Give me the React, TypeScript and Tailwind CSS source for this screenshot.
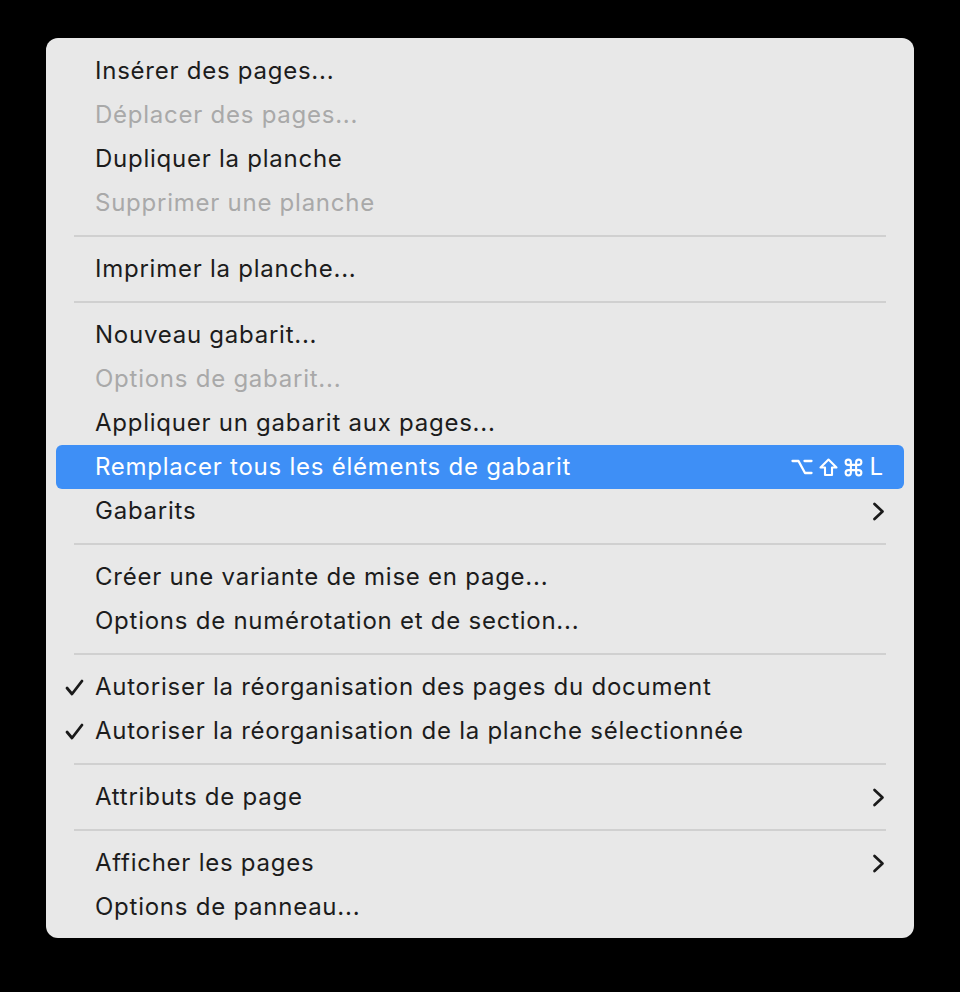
type Item =
  | { type: "sep" }
  | {
      type?: "item";
      label: string;
      disabled?: boolean;
      checked?: boolean;
      submenu?: boolean;
      active?: boolean;
      shortcut?: boolean;
    };

const items: Item[] = [
  { label: "Insérer des pages..." },
  { label: "Déplacer des pages...", disabled: true },
  { label: "Dupliquer la planche" },
  { label: "Supprimer une planche", disabled: true },
  { type: "sep" },
  { label: "Imprimer la planche..." },
  { type: "sep" },
  { label: "Nouveau gabarit..." },
  { label: "Options de gabarit...", disabled: true },
  { label: "Appliquer un gabarit aux pages..." },
  { label: "Remplacer tous les éléments de gabarit", active: true, shortcut: true },
  { label: "Gabarits", submenu: true },
  { type: "sep" },
  { label: "Créer une variante de mise en page..." },
  { label: "Options de numérotation et de section..." },
  { type: "sep" },
  { label: "Autoriser la réorganisation des pages du document", checked: true },
  { label: "Autoriser la réorganisation de la planche sélectionnée", checked: true },
  { type: "sep" },
  { label: "Attributs de page", submenu: true },
  { type: "sep" },
  { label: "Afficher les pages", submenu: true },
  { label: "Options de panneau..." },
];

function Check() {
  return (
    <svg width="19" height="17" viewBox="0 0 19 17" fill="none">
      <path d="M2 9 L7 15 L17 2" stroke="#1a1a1a" strokeWidth="2.8" strokeLinecap="round" strokeLinejoin="round" />
    </svg>
  );
}

function Chevron() {
  return (
    <svg width="13" height="19" viewBox="0 0 13 19" fill="none">
      <path d="M2.5 2 L10.5 9.5 L2.5 17" stroke="#1a1a1a" strokeWidth="2.7" strokeLinecap="round" strokeLinejoin="round" />
    </svg>
  );
}

function OptionKey() {
  return (
    <svg width="22" height="16" viewBox="0 0 22 16" fill="none">
      <path d="M1.5 2 H7.5 L14 14 H20.5 M13.5 2 H20.5" stroke="white" strokeWidth="2.3" strokeLinecap="round" strokeLinejoin="round" />
    </svg>
  );
}

function ShiftKey() {
  return (
    <svg width="19" height="19" viewBox="0 0 19 19" fill="none">
      <path d="M9.5 1.5 L17.5 9.5 H13 V17 H6 V9.5 H1.5 Z" stroke="white" strokeWidth="2.1" strokeLinejoin="round" />
    </svg>
  );
}

function CommandKey() {
  return (
    <svg width="21" height="21" viewBox="0 0 24 24" fill="none">
      <path
        d="M15 6v12a3 3 0 1 0 3-3H6a3 3 0 1 0 3 3V6a3 3 0 1 0-3 3h12a3 3 0 1 0-3-3"
        stroke="white"
        strokeWidth="2.4"
        strokeLinecap="round"
        strokeLinejoin="round"
      />
    </svg>
  );
}

export default function App() {
  return (
    <div className="w-[960px] h-[992px] bg-black pl-[46px] pt-[38px]" style={{ fontFamily: "Inter, 'Noto Sans', sans-serif" }}>
      <div className="w-[868px] h-[900px] bg-[#e8e8e8] rounded-[12px] pt-[11px] px-[10px]">
        {items.map((item, i) => {
          if (item.type === "sep") {
            return (
              <div key={i} className="h-[22px] flex items-center px-[18px]">
                <div className="h-[2px] w-full bg-[#d0d0d0]" />
              </div>
            );
          }
          return (
            <div
              key={i}
              className={`h-[44px] flex items-center rounded-[6px] text-[24px] tracking-[0.75px] ${
                item.active ? "bg-[#3e8ff6] text-white" : item.disabled ? "text-[#a9a9a9]" : "text-[#1c1c1c]"
              }`}
            >
              <div className="w-[39px] flex justify-start pl-[9px]">{item.checked && <Check />}</div>
              <div className="flex-1">{item.label}</div>
              {item.shortcut && (
                <div className="pr-[21px] flex items-center">
                  <OptionKey />
                  <div className="ml-[6px]">
                    <ShiftKey />
                  </div>
                  <div className="ml-[5px]">
                    <CommandKey />
                  </div>
                  <span className="ml-[5px] tracking-normal">L</span>
                </div>
              )}
              {item.submenu && (
                <div className="pr-[19px] flex items-center">
                  <Chevron />
                </div>
              )}
            </div>
          );
        })}
      </div>
    </div>
  );
}
